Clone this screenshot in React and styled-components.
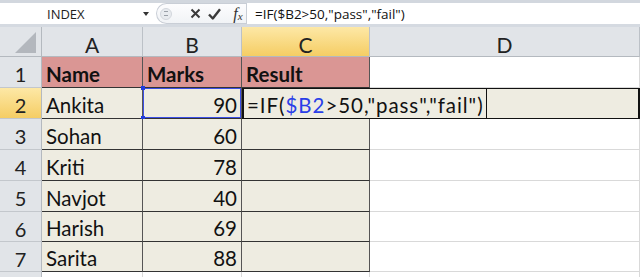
import React from 'react';
import styled, { createGlobalStyle, css } from 'styled-components';

const GlobalStyle = createGlobalStyle`
  html, body { margin: 0; padding: 0; background: #fff; }
  body { font-family: Lato, "Open Sans", sans-serif; overflow: hidden; }
`;

const Page = styled.div`
  width: 640px;
  height: 277px;
  overflow: hidden;
  background: #fff;
  display: flex;
  flex-direction: column;
`;

const FormulaBar = styled.div`
  height: 27px;
  flex: none;
  box-sizing: border-box;
  border-top: 3px solid #d2d7de;
  border-bottom: 3px solid #d5dae1;
  display: flex;
  background: #fff;
`;

const NameBox = styled.div`
  width: 155px;
  display: flex;
  align-items: center;
  justify-content: space-between;
  box-sizing: border-box;
  padding: 0 6px 0 47px;
  font-family: "Open Sans", "Liberation Sans", sans-serif;
  font-size: 13px;
  color: #1e1e1e;
`;

const DropArrow = styled.span`
  width: 0;
  height: 0;
  border-left: 3.5px solid transparent;
  border-right: 3.5px solid transparent;
  border-top: 4px solid #333;
`;

const ButtonGroup = styled.div`
  width: 90px;
  box-sizing: border-box;
  display: flex;
  align-items: center;
  border: 1px solid #c9ced6;
  border-right: none;
  border-radius: 11px 0 0 11px;
  background: linear-gradient(#fdfdfe, #f1f3f6);
  margin: 0 0 0 1px;
`;

const Grip = styled.span`
  width: 10px;
  height: 10px;
  margin-left: 3px;
  border-radius: 50%;
  background: #e8ebef;
  border: 1px solid #d3d7dd;
  display: flex;
  align-items: center;
  justify-content: center;
  &::after {
    content: '';
    width: 4px;
    height: 3px;
    border-top: 1px solid #9aa0a8;
    border-bottom: 1px solid #9aa0a8;
  }
`;

const IconBtn = styled.span`
  display: flex;
  align-items: center;
  justify-content: center;
  width: ${(p) => p.$w}px;
  margin-left: ${(p) => p.$ml}px;
`;

const Fx = styled.span`
  font-family: "Liberation Serif", "DejaVu Serif", serif;
  font-style: italic;
  color: #333;
  font-size: 16px;
  line-height: 1;
  & > small {
    font-size: 11px;
    font-style: italic;
    vertical-align: -1px;
  }
`;

const FormulaInput = styled.div`
  flex: 1;
  display: flex;
  align-items: center;
  box-sizing: border-box;
  border-left: 1px solid #c9ced6;
  padding-left: 8px;
  font-family: "Open Sans", "Liberation Sans", sans-serif;
  font-size: 13.5px;
  color: #111;
  white-space: pre;
`;

const Sheet = styled.div`
  display: grid;
  grid-template-columns: 42px 101px 99px 128px 270px;
  grid-template-rows: 30px 31px 31px 31px 31px 31px 30px 30px 10px;
`;

const headerBase = css`
  box-sizing: border-box;
  display: flex;
  align-items: center;
  justify-content: center;
  color: #222;
  background: ${(p) =>
    p.$selected ? 'linear-gradient(#fde8a6, #f5cd64)' : '#e1e4e8'};
`;

const Corner = styled.div`
  ${headerBase};
  border-right: 1px solid #b4b9bf;
  border-bottom: 1px solid #b4b9bf;
  align-items: flex-end;
  justify-content: flex-end;
  padding: 0 5px 3px 0;
`;

const ColHeader = styled.div`
  ${headerBase};
  border-right: 1px solid #bcc1c7;
  border-bottom: 1px solid #b4b9bf;
  font-size: 21px;
  padding-top: 6px;
`;

const RowHeader = styled.div`
  ${headerBase};
  border-right: 1px solid #b4b9bf;
  border-bottom: 1px solid #c3c7cc;
  font-size: 20px;
  padding-top: 4px;
`;

const cellFill = {
  title: '#da9694',
  data: '#eeece1',
  empty: '#ffffff',
};

const Cell = styled.div`
  position: relative;
  box-sizing: border-box;
  display: flex;
  align-items: center;
  justify-content: ${(p) => (p.$right ? 'flex-end' : 'flex-start')};
  padding: 3px 4px 0 4px;
  background: ${(p) => cellFill[p.$kind]};
  border-right: 1px solid ${(p) => (p.$kind === 'empty' ? '#d9d9d9' : '#555')};
  border-bottom: 1px solid ${(p) => (p.$kind === 'empty' ? '#d9d9d9' : '#333')};
  font-size: 20.5px;
  font-weight: ${(p) => (p.$kind === 'title' ? 700 : 400)};
  color: #111;
  white-space: nowrap;
  ${(p) =>
    p.$ref &&
    css`
      box-shadow: inset 0 0 0 1px #3c4fe6;
    `}
`;

const Handle = styled.span`
  position: absolute;
  left: -2px;
  ${(p) => (p.$bottom ? 'bottom: -2px;' : 'top: -2px;')}
  width: 4px;
  height: 4px;
  background: #1f3be0;
`;

const EditRow = styled.div`
  grid-column: 4 / span 2;
  box-sizing: border-box;
  margin: -1px 0 -1px 0;
  display: flex;
  background: #eeece1;
  border: 2px solid #111;
`;

const EditBox = styled.div`
  width: 243px;
  flex: none;
  box-sizing: border-box;
  display: flex;
  align-items: center;
  padding: 2px 0 0 3px;
  border-right: 1.5px solid #111;
  font-size: 20.5px;
  letter-spacing: 0.95px;
  color: #111;
  white-space: pre;
`;

const RefText = styled.span`
  color: #2a3fe8;
`;

const rows = [
  ['Ankita', 90],
  ['Sohan', 60],
  ['Kriti', 78],
  ['Navjot', 40],
  ['Harish', 69],
  ['Sarita', 88],
];

export default function App() {
  return (
    <Page>
      <GlobalStyle />
      <FormulaBar>
        <NameBox>
          INDEX
          <DropArrow />
        </NameBox>
        <ButtonGroup>
          <Grip />
          <IconBtn $w={12} $ml={17}>
            <svg width="11" height="11" viewBox="0 0 11 11">
              <path d="M1.5 1.5 L9.5 9.5 M9.5 1.5 L1.5 9.5" stroke="#3a3a3a" strokeWidth="2" fill="none" />
            </svg>
          </IconBtn>
          <IconBtn $w={14} $ml={6}>
            <svg width="13" height="12" viewBox="0 0 13 12">
              <path d="M1 6.5 L4.8 10.5 L12 1.2" stroke="#3a3a3a" strokeWidth="2.4" fill="none" strokeLinejoin="round" />
            </svg>
          </IconBtn>
          <IconBtn $w={16} $ml={9}>
            <Fx>
              f<small>x</small>
            </Fx>
          </IconBtn>
        </ButtonGroup>
        <FormulaInput>=IF($B2&gt;50,"pass","fail")</FormulaInput>
      </FormulaBar>

      <Sheet>
        <Corner>
          <svg width="21" height="21" viewBox="0 0 21 21">
            <polygon points="21,0 21,21 0,21" fill="#b3b7bd" />
          </svg>
        </Corner>
        <ColHeader>A</ColHeader>
        <ColHeader>B</ColHeader>
        <ColHeader $selected>C</ColHeader>
        <ColHeader>D</ColHeader>

        <RowHeader>1</RowHeader>
        <Cell $kind="title">Name</Cell>
        <Cell $kind="title">Marks</Cell>
        <Cell $kind="title">Result</Cell>
        <Cell $kind="empty" />

        {rows.map(([name, marks], i) => {
          const n = i + 2;
          const isEdit = n === 2;
          return (
            <React.Fragment key={name}>
              <RowHeader $selected={isEdit}>{n}</RowHeader>
              <Cell $kind="data">{name}</Cell>
              <Cell $kind="data" $right $ref={isEdit}>
                {isEdit && <Handle />}
                {isEdit && <Handle $bottom />}
                {marks}
              </Cell>
              {isEdit ? (
                <EditRow>
                  <EditBox>
                    =IF(<RefText>$B2</RefText>&gt;50,"pass","fail")
                  </EditBox>
                </EditRow>
              ) : (
                <>
                  <Cell $kind="data" />
                  <Cell $kind="empty" />
                </>
              )}
            </React.Fragment>
          );
        })}

        <RowHeader />
        <Cell $kind="empty" />
        <Cell $kind="empty" />
        <Cell $kind="empty" />
        <Cell $kind="empty" />
      </Sheet>
    </Page>
  );
}
